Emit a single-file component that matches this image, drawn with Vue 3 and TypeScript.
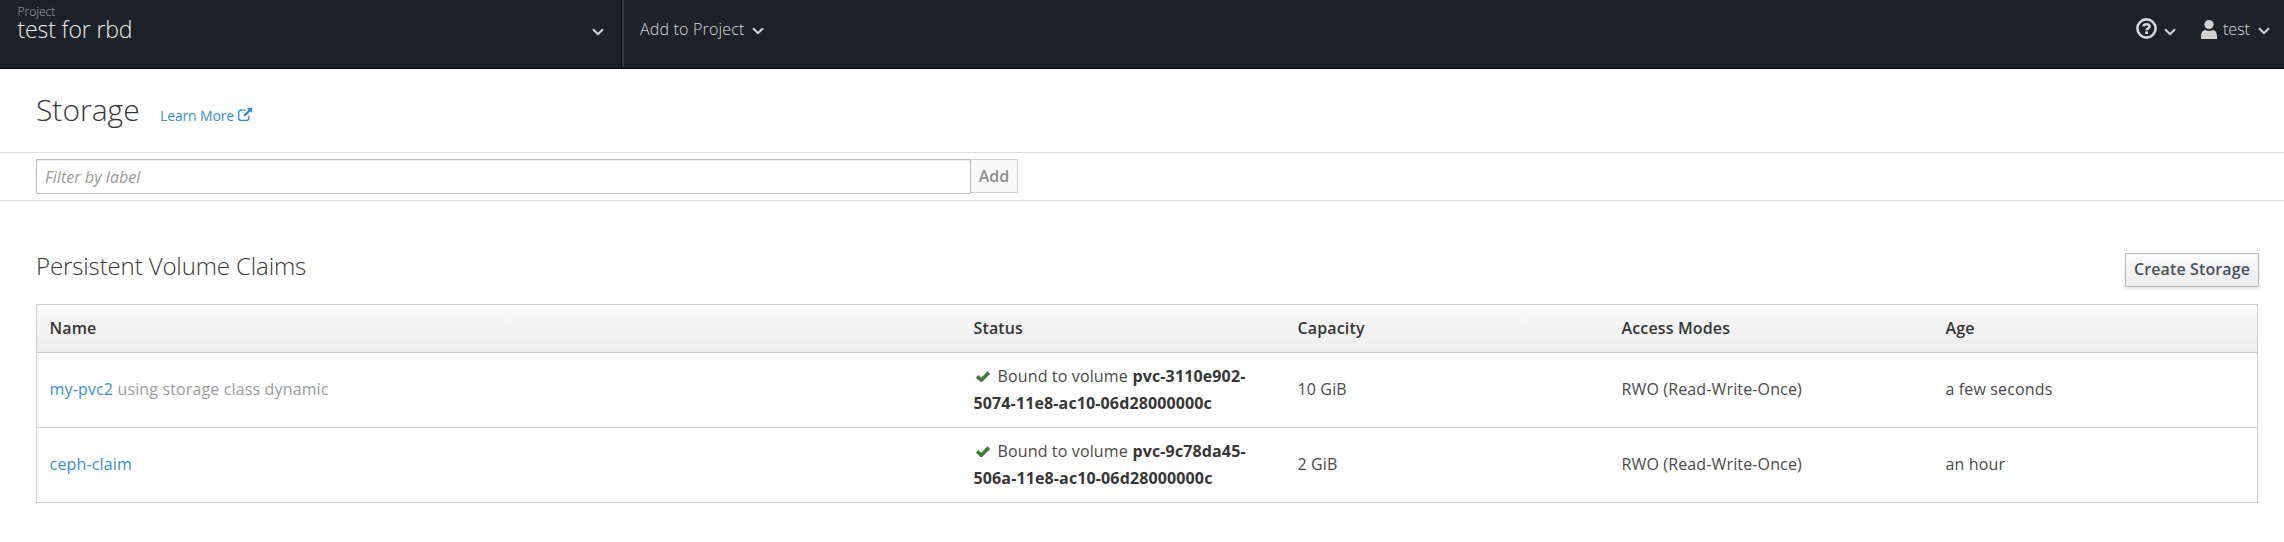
<script setup lang="ts">
interface Claim {
  name: string
  storageClass?: string
  volume: [string, string]
  capacity: string
  accessModes: string
  age: string
}

const columns: string[] = ['Name', 'Status', 'Capacity', 'Access Modes', 'Age']

const claims: Claim[] = [
  {
    name: 'my-pvc2',
    storageClass: 'dynamic',
    volume: ['pvc-3110e902-', '5074-11e8-ac10-06d28000000c'],
    capacity: '10 GiB',
    accessModes: 'RWO (Read-Write-Once)',
    age: 'a few seconds',
  },
  {
    name: 'ceph-claim',
    volume: ['pvc-9c78da45-', '506a-11e8-ac10-06d28000000c'],
    capacity: '2 GiB',
    accessModes: 'RWO (Read-Write-Once)',
    age: 'an hour',
  },
]
</script>

<template>
  <div class="page">
    <header class="navbar">
      <div class="project">
        <div class="project-text">
          <span class="project-label">Project</span>
          <span class="project-name">test for rbd</span>
        </div>
        <svg class="chevron" viewBox="0 0 12 8"><path d="M1 1.2 6 6.2 11 1.2" /></svg>
      </div>
      <div class="add">
        <span class="add-text">Add to Project</span>
        <svg class="chevron" viewBox="0 0 12 8"><path d="M1 1.2 6 6.2 11 1.2" /></svg>
      </div>
      <div class="utility">
        <svg class="help" viewBox="0 0 21 21">
          <circle cx="10.5" cy="10.5" r="9.1" />
          <path d="M7.3 8.4C7.7 6.8 8.9 6.2 10.5 6.2c1.900 0 3.100.8 3.100 2.200 0 2-3 1.900-3 3.900" />
          <rect x="9.2" y="13.4" width="2.8" height="2.6" />
        </svg>
        <svg class="chevron help-chevron" viewBox="0 0 12 8"><path d="M1 1.2 6 6.2 11 1.2" /></svg>
        <svg class="user" viewBox="0 0 16 19">
          <circle cx="8" cy="4.6" r="4.6" />
          <path d="M0 19v-3.2C0 12 2 10 4.3 9.9c2.2 1.3 5.2 1.3 7.4 0C14 10 16 12 16 15.800V19z" />
        </svg>
        <span class="user-name">test</span>
        <svg class="chevron" viewBox="0 0 12 8"><path d="M1 1.2 6 6.2 11 1.2" /></svg>
      </div>
    </header>

    <div class="title-bar">
      <h1>Storage</h1>
      <a class="learn">Learn More</a>
      <svg class="external" viewBox="0 0 14 13">
        <path class="frame" d="M7.500 2.200H2.700A2 2 0 0 0 .7 4.200v6.100a2 2 0 0 0 2 2h6.200a2 2 0 0 0 2-2V7.500" />
        <path class="arrow" d="M9 0h5v5l-1.700-1.700-5.200 5.200-1.600-1.600 5.200-5.200z" />
      </svg>
    </div>

    <div class="filter-bar">
      <input class="filter" type="text" placeholder="Filter by label" />
      <button class="add-filter" disabled>Add</button>
    </div>

    <main>
      <div class="section-head">
        <h2>Persistent Volume Claims</h2>
        <button class="create">Create Storage</button>
      </div>

      <div class="table">
        <div class="row head">
          <div v-for="c in columns" :key="c" class="cell">{{ c }}</div>
        </div>
        <div v-for="c in claims" :key="c.name" class="row body">
          <div class="cell name">
            <a>{{ c.name }}</a>
            <span v-if="c.storageClass" class="muted"> using storage class {{ c.storageClass }}</span>
          </div>
          <div class="cell status">
            <div class="status-line">
              <svg class="check" viewBox="0 0 14 11"><path d="M1.200 5.300 5.300 9.200 12.800 1.600" /></svg>
              <span class="bound">Bound to volume</span>
              <b>{{ c.volume[0] }}</b>
            </div>
            <div class="status-line"><b>{{ c.volume[1] }}</b></div>
          </div>
          <div class="cell">{{ c.capacity }}</div>
          <div class="cell">{{ c.accessModes }}</div>
          <div class="cell">{{ c.age }}</div>
        </div>
      </div>
    </main>
  </div>
</template>

<style>
body {
  margin: 0;
  background: #fff;
}
</style>

<style scoped>
.page {
  width: 2284px;
  height: 542px;
  overflow: hidden;
  background: #fff;
  color: #363636;
  font: 16px/24px 'Open Sans', 'Noto Sans', sans-serif;
}
* {
  box-sizing: border-box;
}
svg {
  display: block;
  flex: none;
}
h1,
h2 {
  margin: 0;
  font-weight: 300;
}
a {
  color: #3a8fd6;
}
.navbar {
  display: flex;
  height: 69px;
  background: #1d2228;
  border-bottom: 1px solid #030303;
  color: #dadada;
  font-weight: 300;
}
.project {
  display: flex;
  justify-content: space-between;
  width: 622px;
  padding: 5px 17px 0 17.500px;
  border-right: 1px solid #050505;
}
.project-text {
  display: flex;
  flex-direction: column;
  white-space: nowrap;
}
.project-label {
  font-size: 12px;
  line-height: 13px;
  color: #a5a5a5;
}
.project-name {
  font-size: 23px;
  line-height: 22px;
  letter-spacing: -0.12px;
  color: #ececec;
}
.chevron {
  width: 12px;
  height: 8px;
  fill: none;
  stroke: #d6d6d6;
  stroke-width: 2;
}
.project .chevron {
  margin-top: 23px;
}
.add {
  display: flex;
  padding: 17px 0 0 16px;
  border-left: 2px solid #363b40;
  height: 67px;
}
.add-text {
  width: 112px;
  letter-spacing: 0.18px;
  white-space: nowrap;
}
.add .chevron {
  margin-top: 10px;
}
.utility {
  display: flex;
  margin-left: auto;
  padding: 17px 14px 0 0;
}
.help {
  width: 21px;
  height: 21px;
  margin-top: 1px;
  fill: none;
  stroke: #d6d6d6;
  stroke-width: 2.600;
}
.help rect {
  fill: #d6d6d6;
  stroke: none;
}
.help-chevron {
  margin: 11px 25px 0 7px;
}
.user {
  width: 16px;
  height: 19px;
  margin: 3px 6px 0 0;
  fill: #d1d1d1;
}
.user-name {
  width: 35px;
}
.user-name + .chevron {
  margin-top: 10px;
}
.title-bar {
  display: flex;
  align-items: baseline;
  height: 84px;
  padding: 21px 36px 0;
  border-bottom: 1px solid #dedede;
}
h1 {
  width: 124px;
  font-size: 30px;
  line-height: 40px;
}
.learn {
  width: 78px;
  font-size: 14px;
  letter-spacing: -0.14px;
  white-space: nowrap;
}
.external {
  width: 14px;
  height: 13px;
}
.frame {
  fill: none;
  stroke: #2b88d5;
  stroke-width: 1.300;
}
.arrow {
  fill: #2b88d5;
}
.filter-bar {
  display: flex;
  align-items: flex-start;
  height: 48px;
  padding: 6px 36px 0;
  border-bottom: 1px solid #dedede;
}
.filter {
  width: 935px;
  height: 35px;
  padding: 0 8px;
  border: 1px solid #b8b8b8;
  border-radius: 1px;
  box-shadow: inset 0 1px 1px rgba(0, 0, 0, 0.075);
  font: 16px/24px 'Open Sans', 'Noto Sans', sans-serif;
  letter-spacing: 0.06px;
  outline: none;
}
.filter::placeholder {
  color: #999;
  font-style: italic;
  opacity: 1;
}
.add-filter {
  width: 47px;
  height: 34px;
  padding: 0;
  border: 1px solid #d1d1d1;
  border-left: 0;
  background: #fafafa;
  color: #8b8d8f;
  font: 600 16px/24px 'Open Sans', 'Noto Sans', sans-serif;
}
main {
  padding: 48px 25px 0 36px;
}
.section-head {
  display: flex;
  justify-content: space-between;
  height: 55px;
}
h2 {
  padding-top: 1px;
  font-size: 24px;
  line-height: 32px;
  letter-spacing: -0.12px;
}
.create {
  width: 134px;
  height: 34px;
  margin-top: 4px;
  padding: 0 0 2px;
  border: 1px solid #b7b7b7;
  border-radius: 1px;
  background: linear-gradient(#fafafa, #ededed);
  box-shadow: 0 2px 3px rgba(3, 3, 3, 0.1);
  color: #4d5258;
  font: 600 16px/24px 'Open Sans', 'Noto Sans', sans-serif;
  letter-spacing: 0.12px;
  white-space: nowrap;
}
.table {
  width: 2222px;
  border: 1px solid #cecece;
}
.row {
  display: grid;
  grid-template-columns: 924.500px 324px 324px 324px 1fr;
  align-items: center;
}
.head {
  height: 47px;
  padding-bottom: 1px;
  background: linear-gradient(#fafafa, #ededed);
  font-weight: 600;
  letter-spacing: 0.14px;
}
.body {
  height: 75px;
  padding-bottom: 2px;
  border-top: 1px solid #cecece;
  color: #4a4a4a;
  letter-spacing: 0.14px;
}
.cell {
  padding-left: 12px;
  white-space: nowrap;
}
.cell:first-child {
  padding-left: 12.600px;
}
.muted {
  color: #9c9c9c;
}
.status {
  padding-top: 1px;
}
.status-line {
  display: flex;
  height: 27px;
  line-height: 27px;
}
.check {
  width: 14px;
  height: 11px;
  margin: 8px 8px 0 2px;
  fill: none;
  stroke: #3f7b38;
  stroke-width: 3.600;
}
.bound {
  width: 135px;
}
b {
  font-weight: 700;
  letter-spacing: 0.13px;
  color: #363636;
}
</style>
